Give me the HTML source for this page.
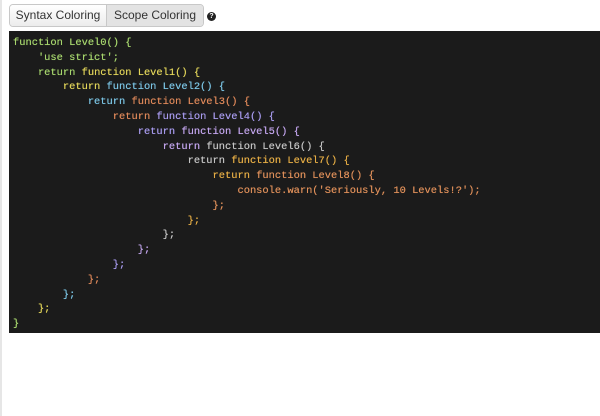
<!DOCTYPE html>
<html><head><style>
*{margin:0;padding:0;box-sizing:border-box}
body{width:600px;height:416px;background:#fff;position:relative;overflow:hidden;font-family:"Liberation Sans",sans-serif}
.strip{position:absolute;left:0;top:0;width:2px;height:416px;background:#e6e6e6}
.btns{position:absolute;left:9px;top:4px;height:23px;display:flex;border:1px solid #c8c8c8;border-radius:4px;overflow:hidden}
.b{font-size:12px;color:#333;line-height:21px;white-space:nowrap;background:linear-gradient(#fff,#ececec)}
.b1{width:97px;border-right:1px solid #c8c8c8;text-align:center}
.b2{width:96px;text-align:center;background:#e3e3e3}
.help{position:absolute;left:207px;top:12px;width:9px;height:9px;border-radius:50%;background:#222;color:#fff;font-size:7px;font-weight:bold;text-align:center;line-height:9px}
.code{position:absolute;left:9px;top:31px;width:591px;height:302px;background:#1b1b1b;padding:5px 0 0 4px;font-family:"Liberation Mono",monospace;font-size:10.4px;line-height:14.8px;white-space:pre;color:#ccc;text-shadow:0 0 0.4px currentColor}
.c0{color:#a8d86e}.c1{color:#e3d65a}.c2{color:#7cc6e6}.c3{color:#e0895a}.c4{color:#a99cf0}.c5{color:#c4a6ef}.c6{color:#c6c6c6}.c7{color:#e7ae45}.c8{color:#e0905a}
</style></head><body>
<div class="strip"></div>
<div class="btns"><div class="b b1">Syntax Coloring</div><div class="b b2">Scope Coloring</div></div>
<div class="help">?</div>
<div class="code"><span class="c0">function Level0() {
    'use strict';
    return </span><span class="c1">function Level1() {
        return </span><span class="c2">function Level2() {
            return </span><span class="c3">function Level3() {
                return </span><span class="c4">function Level4() {
                    return </span><span class="c5">function Level5() {
                        return </span><span class="c6">function Level6() {
                            return </span><span class="c7">function Level7() {
                                return </span><span class="c8">function Level8() {
                                    console.warn('Seriously, 10 Levels!?');
                                };</span><span class="c7">
                            };</span><span class="c6">
                        };</span><span class="c5">
                    };</span><span class="c4">
                };</span><span class="c3">
            };</span><span class="c2">
        };</span><span class="c1">
    };</span><span class="c0">
}</span></div>
</body></html>
